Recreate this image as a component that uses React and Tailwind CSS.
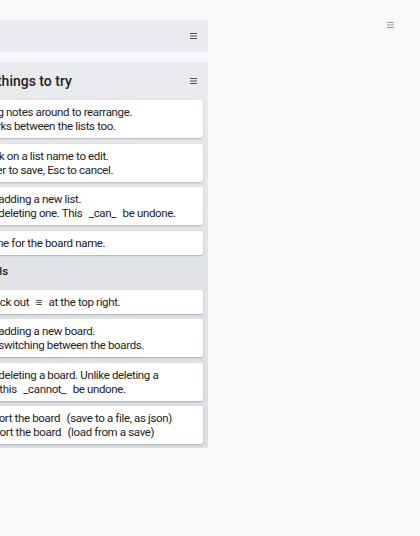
import React from 'react';

const Burger = ({ className = '' }) => (
  <svg width="7" height="6" viewBox="0 0 7 6" className={className}>
    <rect x="0" y="0" width="7" height="1" fill="currentColor" />
    <rect x="0" y="2.5" width="7" height="1" fill="currentColor" />
    <rect x="0" y="5" width="7" height="1" fill="currentColor" />
  </svg>
);

const Card = ({ children }) => (
  <div className="bg-white rounded-[2px] px-[6px] py-[5px] leading-[14px] shadow-[0_1px_2px_rgba(0,0,0,0.22)] whitespace-nowrap">
    {children}
  </div>
);

const Em = ({ children }) => <span className="mx-[4px]">{children}</span>;

export default function App() {
  return (
    <div
      className="min-h-screen bg-[#f7f8fa] flex overflow-hidden text-[11.5px] tracking-[-0.35px] text-[#222]"
      style={{ fontFamily: 'Roboto, "Liberation Sans", sans-serif' }}
    >
      <div className="shrink-0 w-[238px] -ml-[30px] pt-[20px] flex flex-col gap-[10px]">
        {/* board header */}
        <div className="h-[32px] bg-[#e8eaed] rounded-[2px] flex items-center justify-end pr-[11px]">
          <Burger className="text-[#555]" />
        </div>

        {/* lists */}
        <div className="rounded-[2px] bg-gradient-to-b from-[#e9ebee] to-[#dbdee2] pb-[4px]">
          <div className="h-[38px] flex items-center justify-between pr-[11px]">
            <span className="-ml-[2px] text-[14px] tracking-normal font-medium text-[#1f1f1f]">Few things to try</span>
            <Burger className="text-[#555]" />
          </div>
          <div className="px-[5px] flex flex-col gap-[5.5px]">
            <Card>
              Drag notes around to rearrange.
              <br />
              Works between the lists too.
            </Card>
            <Card>
              Click on a list name to edit.
              <br />
              Enter to save, Esc to cancel.
            </Card>
            <Card>
              Try adding a new list.
              <br />
              Try deleting one. This <Em>_can_</Em> be undone.
            </Card>
            <Card>Same for the board name.</Card>
          </div>

          <div className="h-[35px] flex items-center pl-[10px] font-medium tracking-normal text-[#1f1f1f]">Tools</div>
          <div className="px-[5px] flex flex-col gap-[5.5px]">
            <Card>
              Check out <Em>≡</Em> at the top right.
            </Card>
            <Card>
              Try adding a new board.
              <br />
              Try switching between the boards.
            </Card>
            <Card>
              Try deleting a board. Unlike deleting a
              <br />
              list, this <Em>_cannot_</Em> be undone.
            </Card>
            <Card>
              Export the board <Em>(save to a file, as json)</Em>
              <br />
              Import the board <Em>(load from a save)</Em>
            </Card>
          </div>
        </div>
      </div>

      <div className="flex-1 flex justify-end pt-[22px] pr-[26px]">
        <Burger className="text-[#9a9a9a]" />
      </div>
    </div>
  );
}
